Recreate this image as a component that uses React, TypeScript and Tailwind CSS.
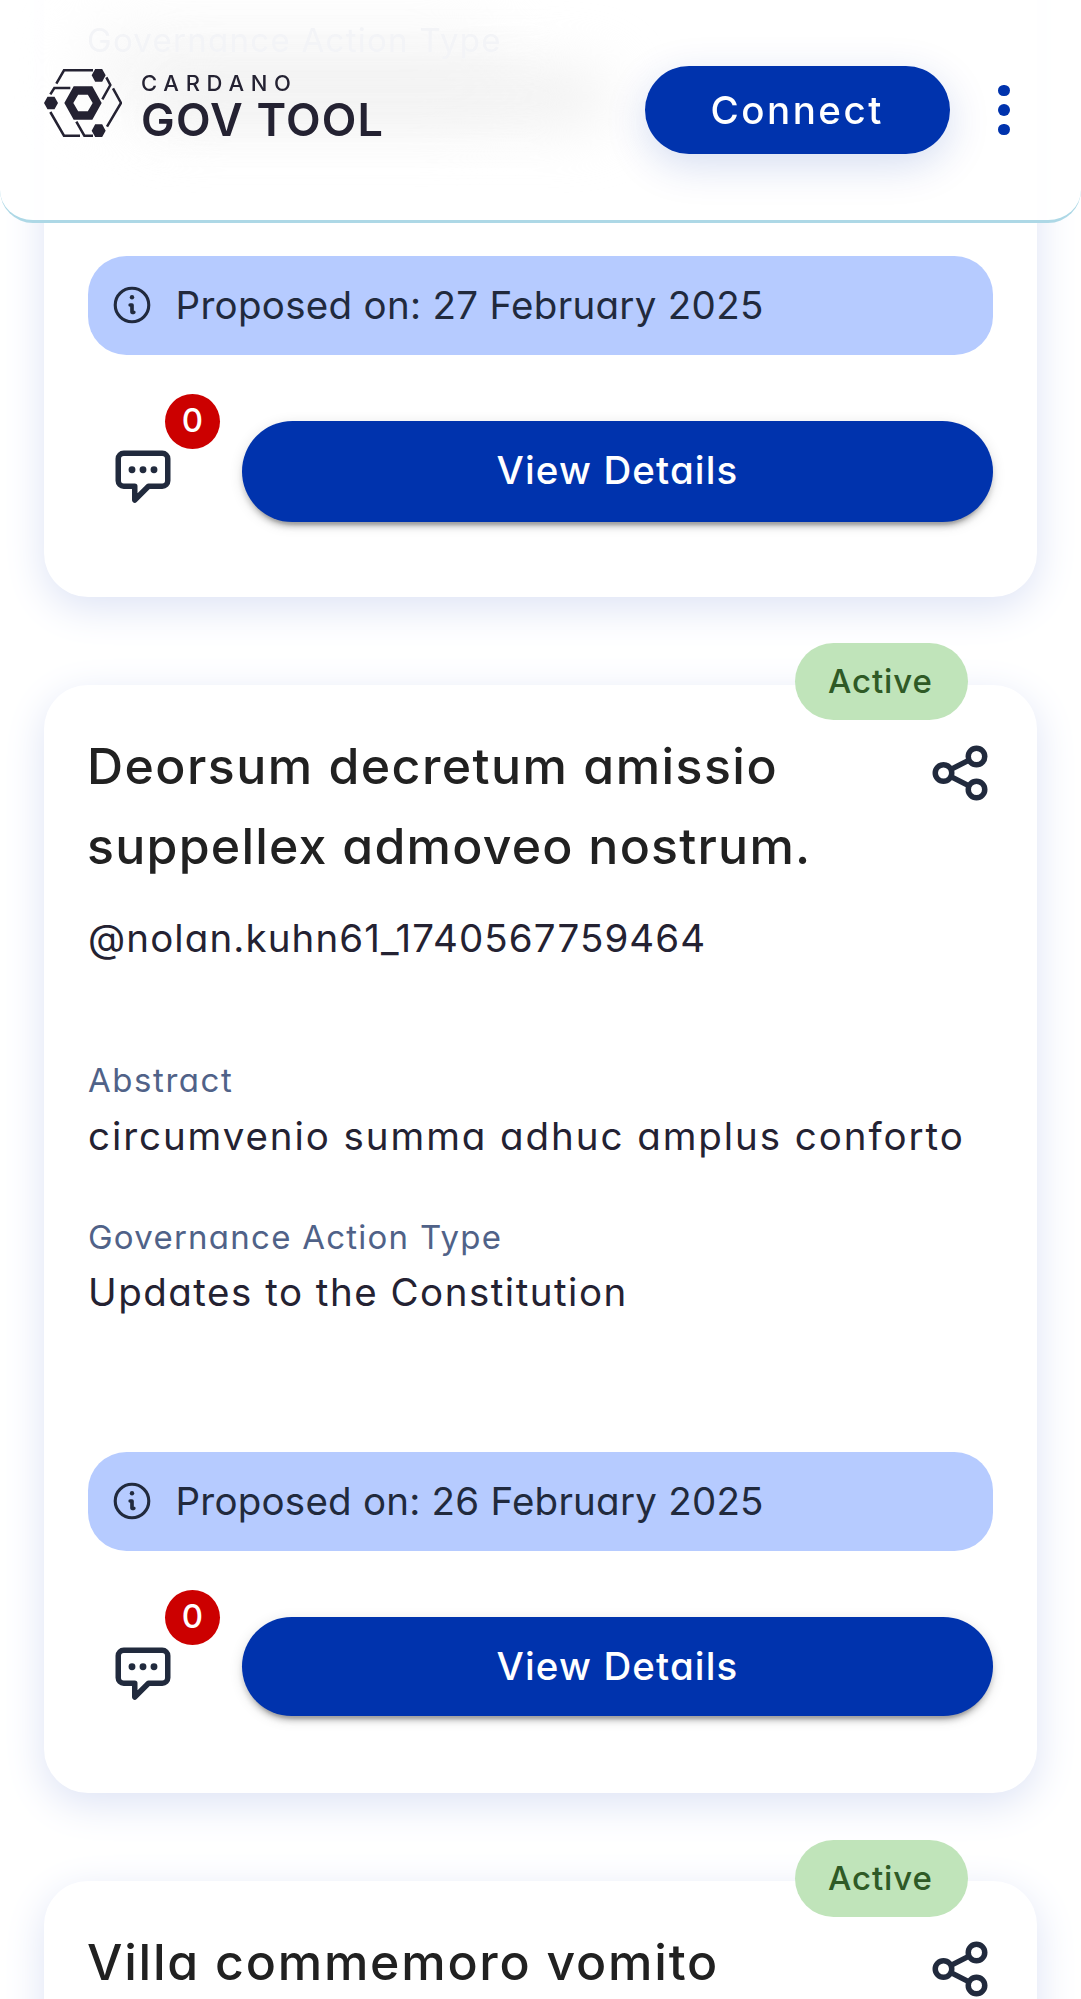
import type { ReactNode } from "react";

type Proposal = {
  title?: { text: string; tracking: string }[];
  details?: { author: string; abstract: string; actionType: string };
  date?: string;
  dateTracking?: string;
  buttonSize?: string;
};

const proposals: Proposal[] = [
  {
    date: "27 February 2025",
    dateTracking: "tracking-[0.3px]",
    buttonSize: "h-[101.5px]",
  },
  {
    title: [
      { text: "Deorsum decretum amissio", tracking: "tracking-[1.46px]" },
      { text: "suppellex admoveo nostrum.", tracking: "tracking-[1.24px]" },
    ],
    details: {
      author: "@nolan.kuhn61_1740567759464",
      abstract: "circumvenio summa adhuc amplus conforto",
      actionType: "Updates to the Constitution",
    },
    date: "26 February 2025",
    dateTracking: "tracking-[0.23px]",
    buttonSize: "h-[99px] pt-[2px]",
  },
  {
    title: [{ text: "Villa commemoro vomito", tracking: "tracking-[1.77px]" }],
  },
];

function LogoMark() {
  return (
    <svg className="h-[68px] w-[78px] shrink-0" viewBox="43 57 234 204" fill="none" stroke="#242232" strokeWidth="7.500">
      <path d="M80 101 103 61H190M230 82l12 23-24 43M250 115l24 44-42 71M62 133l12-19h48M62 186l41 71h48M140 215l24 42h26" />
      <g fill="#242232" stroke="none">
        <path d="M186 76l10.500-19h21l10.500 19-10.500 19h-21zM186 242l10.500-19h21l10.500 19-10.500 19h-21zM43 159l10.500-19h21l10.500 19-10.500 19h-21z" />
        <path fillRule="evenodd" d="M104 159l28-50h56l28 50-28 50h-56zM131 159l14.500 25h29l14.500-25-14.500-25h-29z" />
      </g>
    </svg>
  );
}

function ShareIcon() {
  return (
    <svg className="size-[66px]" viewBox="0 0 24 24" fill="none" stroke="#212a3d" strokeWidth="2">
      <circle cx="6" cy="12" r="3" />
      <circle cx="18" cy="6" r="3" />
      <circle cx="18" cy="18" r="3" />
      <path d="M8.700 10.700 15.300 7.300M8.700 13.300l6.600 3.400" />
    </svg>
  );
}

function InfoIcon() {
  return (
    <svg className="size-11 shrink-0" viewBox="0 0 24 24" fill="none" stroke="#212a3d" strokeLinecap="round" strokeLinejoin="round">
      <circle cx="12" cy="12" r="9.150" strokeWidth="1.700" />
      <path d="M11 12h1v4h1" strokeWidth="2" />
      <circle cx="12" cy="7.800" r="1.200" fill="#212a3d" stroke="none" />
    </svg>
  );
}

function CommentIcon() {
  return (
    <svg className="size-[66px]" viewBox="0 0 24 24" fill="none" stroke="#212a3d" strokeWidth="2" strokeLinecap="round" strokeLinejoin="round">
      <path d="M9 20v-5H5a2 2 0 0 1-2-2V5a2 2 0 0 1 2-2h14a2 2 0 0 1 2 2v8a2 2 0 0 1-2 2h-5z" />
      <g fill="#212a3d" stroke="none">
        <circle cx="8" cy="9" r="1.250" />
        <circle cx="12" cy="9" r="1.250" />
        <circle cx="16" cy="9" r="1.250" />
      </g>
    </svg>
  );
}

function Label({ className, children }: { className: string; children: ReactNode }) {
  return <p className={`text-[33px] leading-[48px] text-[#506288] ${className}`}>{children}</p>;
}

function Header() {
  return (
    <header className="fixed inset-x-0 top-0 isolate z-10 flex h-[223px] items-start overflow-hidden rounded-b-[33px] border-b-3 border-[#add8e6] bg-white/90 pl-11">
      <div className="absolute top-[25px] left-[80px] -z-10 h-[90px] w-[430px] rounded-full bg-[#f8f8f8] blur-[30px]" />
      <div className="absolute top-[68px] left-[150px] -z-10 h-[58px] w-[460px] rounded-full bg-[#f1f1f1] blur-[28px]" />
      <p className="absolute top-[16px] left-[87px] -z-10 text-[33px] leading-[48px] tracking-[1.280px] whitespace-nowrap text-[#f3f4f7]">
        Governance Action Type
      </p>
      <div className="mt-[69px] flex">
        <LogoMark />
        <div className="ml-[19px] whitespace-nowrap text-[#242232]">
          <p className="pt-px text-[22px] leading-[26px] font-medium tracking-[6.700px]">CARDANO</p>
          <p className="text-[45px] leading-[48px] font-semibold tracking-[1.200px]">GOV TOOL</p>
        </div>
      </div>
      <button className="mt-[66px] mr-[48.500px] ml-auto h-[88px] w-[305px] rounded-full bg-[#0033ad] pt-[2px] text-[38.500px] font-medium tracking-[2.500px] text-white shadow-[0_11px_41px_rgba(0,51,173,0.17)]">
        Connect
      </button>
      <div className="mt-[85px] mr-[71.500px] flex flex-col gap-2">
        <i className="size-[11.400px] rounded-full bg-[#0033ad]" />
        <i className="size-[11.400px] rounded-full bg-[#0033ad]" />
        <i className="size-[11.400px] rounded-full bg-[#0033ad]" />
      </div>
    </header>
  );
}

function ProposalCard({ item }: { item: Proposal }) {
  return (
    <article className="relative flex h-[1108.250px] shrink-0 flex-col rounded-[44px] bg-white px-11 pt-[41px] pb-[77px] shadow-[0_11px_41px_#dde3f5]">
      {item.title && (
        <>
          <span className="absolute top-[-41.200px] left-[751px] h-[77px] w-[172.500px] rounded-full bg-[#c0e4ba] pl-[33px] text-[33px] leading-[77px] font-medium tracking-[0.900px] text-[#2f5a26]">
            Active
          </span>
          <div className="flex h-[161px] items-start justify-between">
            <h2 className="-ml-px text-[50px] leading-[80px] font-medium whitespace-nowrap text-[#212121]">
              {item.title.map((line) => (
                <span key={line.text} className={`block ${line.tracking}`}>
                  {line.text}
                </span>
              ))}
            </h2>
            <button className="mt-[14px] mr-[0.500px]">
              <ShareIcon />
            </button>
          </div>
        </>
      )}
      {item.details && (
        <div className="text-[38.500px] leading-[58px] whitespace-nowrap text-[#242232]">
          <p className="mt-[22.700px] tracking-[1.100px]">{item.details.author}</p>
          <Label className="mt-[89.200px] tracking-[1.550px]">Abstract</Label>
          <p className="mt-[2.800px] tracking-[1.930px]">{item.details.abstract}</p>
          <Label className="mt-[47.900px] tracking-[1.250px]">Governance Action Type</Label>
          <p className="mt-[2.100px] tracking-[1.500px]">{item.details.actionType}</p>
        </div>
      )}
      {item.date && (
        <>
          <div className="mt-auto flex h-[99px] items-center gap-[21.500px] rounded-[38.500px] bg-[#b6cbff] pl-[22px] text-[38.500px] text-[#212a3d]">
            <InfoIcon />
            <span className={`pt-px ${item.dateTracking}`}>Proposed on: {item.date}</span>
          </div>
          <div className="mt-[65.800px] flex h-[99px] items-start gap-11">
            <div className="relative flex w-[110px] justify-center pt-[24.800px]">
              <CommentIcon />
              <span className="absolute top-[-27px] left-[77px] flex size-[55px] items-center justify-center rounded-full bg-[#cc0000] pb-px text-[33px] leading-none font-medium text-white">
                0
              </span>
            </div>
            <button
              className={`flex-1 rounded-full bg-[#0033ad] text-[38.500px] font-medium tracking-[1.130px] text-white shadow-[0_8px_3px_-5px_rgba(0,0,0,0.2),0_5.500px_5.500px_rgba(0,0,0,0.14),0_3px_14px_rgba(0,0,0,0.12)] ${item.buttonSize}`}
            >
              View Details
            </button>
          </div>
        </>
      )}
    </article>
  );
}

export default function App() {
  return (
    <div className="h-[1999px] overflow-hidden bg-white font-['Inter',sans-serif] [font-feature-settings:'cv11']">
      <Header />
      <main className="-mt-[511.750px] flex flex-col gap-[88px] px-11">
        {proposals.map((item, i) => (
          <ProposalCard key={i} item={item} />
        ))}
      </main>
    </div>
  );
}
